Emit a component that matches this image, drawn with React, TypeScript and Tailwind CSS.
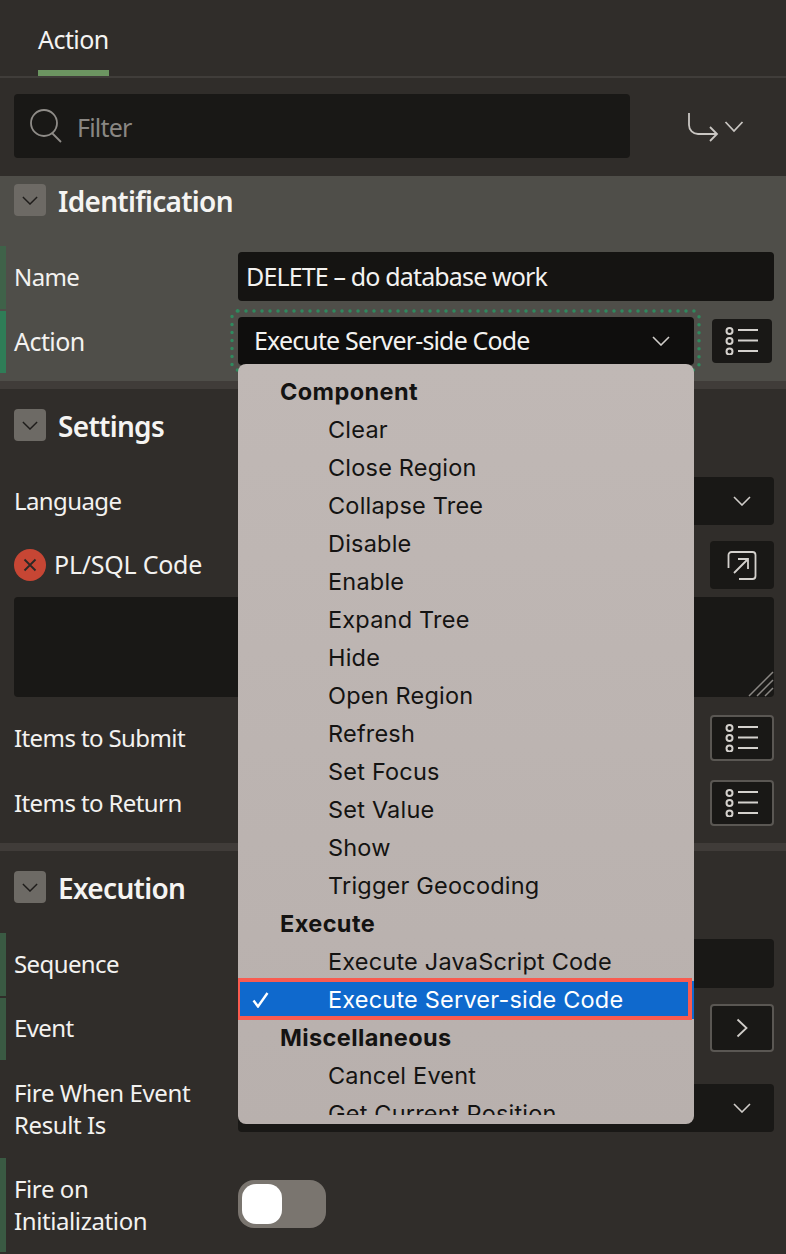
import type { ReactNode } from 'react'

const LABEL_FONT = "font-['Noto_Sans',sans-serif]"

function Chevron({ className = 'w-[18px] h-[10px] text-[#d0cdc9]' }: { className?: string }) {
    return (
        <svg viewBox="0 0 18 10" fill="none" className={className}>
            <path d="M1 1l8 8 8-8" stroke="currentColor" strokeWidth="1.6" />
        </svg>
    )
}

function ListIcon() {
    return (
        <svg width="34" height="28" viewBox="0 0 34 28" fill="none" stroke="#d4d1cd">
            <circle cx="4.5" cy="4" r="3" strokeWidth="2" />
            <circle cx="4.5" cy="14" r="3" strokeWidth="2" />
            <circle cx="4.5" cy="24.5" r="3" strokeWidth="2" />
            <path d="M13 3h20M13 13.500h20M13 24h20" strokeWidth="2" />
        </svg>
    )
}

function ListButton({ border = false }: { border?: boolean }) {
    return (
        <div className={`rounded flex items-center justify-center bg-[#191816] ${border ? 'w-[64px] h-[46px] border-2 border-[#5a5753]' : 'w-[60px] h-[44px] ml-[2px] mr-[4px]'}`}>
            <ListIcon />
        </div>
    )
}

function SectionHeader({ title }: { title: string }) {
    return (
        <div className="flex items-center h-[32px] pl-[14px] gap-[12px]">
            <div className="w-[32px] h-[32px] rounded bg-[#6d6a65] flex items-center justify-center">
                <Chevron className="w-[16px] h-[9px] text-[#1e1c1a]" />
            </div>
            <div className="pt-[1px] text-[28px] font-semibold text-[#f5f4f2] tracking-[-0.7px]">{title}</div>
        </div>
    )
}

interface RowProps {
    label: ReactNode
    bar?: string
    labelClass?: string
    className: string
    children?: ReactNode
}

// 왼쪽 초록 표시줄 + 라벨 + 입력 컨트롤
function Row({ label, bar = 'border-transparent', labelClass = 'text-[24px] tracking-[-0.6px]', className, children }: RowProps) {
    return (
        <div className={`flex items-center border-l-[6px] pl-[8px] pr-[12px] ${bar} ${className}`}>
            <div className={`w-[224px] shrink-0 leading-[32px] text-[#f3f2f0] ${labelClass}`}>{label}</div>
            <div className="grow flex items-center gap-[16px]">{children}</div>
        </div>
    )
}

const Field = ({ children, className = '' }: { children?: ReactNode; className?: string }) => (
    <div className={`h-[48px] grow rounded bg-[#191816] flex items-center ${className}`}>{children}</div>
)

const MENU: { text: string; head?: boolean; selected?: boolean }[] = [
    { text: 'Component', head: true },
    { text: 'Clear' },
    { text: 'Close Region' },
    { text: 'Collapse Tree' },
    { text: 'Disable' },
    { text: 'Enable' },
    { text: 'Expand Tree' },
    { text: 'Hide' },
    { text: 'Open Region' },
    { text: 'Refresh' },
    { text: 'Set Focus' },
    { text: 'Set Value' },
    { text: 'Show' },
    { text: 'Trigger Geocoding' },
    { text: 'Execute', head: true },
    { text: 'Execute JavaScript Code' },
    { text: 'Execute Server-side Code', selected: true },
    { text: 'Miscellaneous', head: true },
    { text: 'Cancel Event' },
    { text: 'Get Current Position' },
]

function DropdownMenu() {
    return (
        <div className="absolute left-[238px] top-[364px] w-[456px] h-[760px] rounded-lg bg-gradient-to-b from-[#c0b8b5] to-[#b8b0ad] pt-[9px] font-['Inter',sans-serif] text-[23.500px] text-[#141312]">
            <div className="h-[742px] overflow-hidden">
                {MENU.map((item) => (
                    <div
                        key={item.text}
                        className={`h-[38px] leading-[38px] ${item.head ? 'pl-[42px] font-bold tracking-[0.4px]' : 'pl-[90px] tracking-[0.2px]'} ${item.selected ? 'relative bg-[#0f69cd] text-white' : ''}`}
                    >
                        {item.selected && (
                            <>
                                <svg width="18" height="16" viewBox="0 0 18 16" fill="none" className="absolute left-[14px] top-[11px]">
                                    <path d="M1.500 8.500L6 14.500 15.500 1" stroke="#fff" strokeWidth="2.400" />
                                </svg>
                                <div className="absolute left-[-2px] right-[2px] top-[-3px] bottom-[-1px] border-4 border-[#f95b50]" />
                            </>
                        )}
                        {item.text}
                    </div>
                ))}
            </div>
        </div>
    )
}

export default function App() {
    return (
        <div className={`relative w-[786px] h-[1254px] overflow-hidden bg-[#302d2a] ${LABEL_FONT}`}>
            {/* 탭 */}
            <div className="h-[78px] border-b-2 border-[#403d3a] pl-[38px]">
                <div className="w-[71px] h-[76px] border-b-[6px] border-[#6c9561] pt-[19px] text-[25px] leading-[40px] tracking-[-0.55px] text-[#f5f4f2]">
                    Action
                </div>
            </div>

            {/* 필터 */}
            <div className="flex items-center pt-[16px] pl-[14px] h-[98px] pb-[18px]">
                <div className="w-[616px] h-[64px] rounded bg-[#191816] flex items-center pl-[15px] gap-[14px]">
                    <svg width="34" height="34" viewBox="0 0 34 34" fill="none" stroke="#8f8c88" strokeWidth="1.800">
                        <circle cx="15" cy="14" r="13" />
                        <path d="M23 24l9 9" />
                    </svg>
                    <span className="pt-[3px] text-[25px] tracking-[-0.8px] text-[#8a8783]">Filter</span>
                </div>
                <svg width="58" height="32" viewBox="0 0 58 32" fill="none" stroke="#c9c6c2" strokeWidth="1.800" className="ml-[57px]">
                    <path d="M2 3v12c0 5 4 9 9 9h19" />
                    <path d="M23 17l7 7-7 7" />
                    <path d="M38.500 12l8.500 9 8.500-9" />
                </svg>
            </div>

            {/* Identification */}
            <div className="h-[213px] bg-[#4f4e49] border-b-8 border-[#403c39] pt-[8px]">
                <SectionHeader title="Identification" />
                <div className="mt-[30px] flex flex-col gap-[2px]">
                    <Row label="Name" bar="border-[#3f6249]" className="h-[63px] pb-[2px]">
                        <div className="h-[49px] grow rounded bg-[#151412] flex items-center pl-[8px] text-[25px] tracking-[-0.85px] text-[#f3f2f0]">
                            DELETE – do database work
                        </div>
                    </Row>
                    <Row label="Action" labelClass="text-[25px] tracking-[-0.55px]" bar="border-[#2f7d57]" className="h-[62px] pb-[2px]">
                        <div className="relative h-[48px] w-[456px] rounded bg-[#0f0e0d] flex items-center justify-between pl-[16px] pr-[24px] text-[25px] tracking-[-0.85px] text-[#f3f2f0]">
                            Execute Server-side Code
                            <Chevron />
                            <svg width="472" height="64" viewBox="0 0 472 64" fill="none" className="absolute left-[-8px] top-[-8px]">
                                <rect x="2" y="2" width="467" height="59" rx="6" stroke="#2f8a5e" strokeWidth="3.500" strokeLinecap="round" strokeDasharray="0 8" />
                            </svg>
                        </div>
                        <ListButton />
                    </Row>
                </div>
            </div>

            {/* Settings */}
            <div className="h-[454px] pt-[20px]">
                <SectionHeader title="Settings" />
                <Row label="Language" className="h-[48px] mt-[36px]">
                    <Field className="justify-end pr-[23px]"><Chevron /></Field>
                </Row>
                <div className="flex items-center h-[48px] mt-[16px] pl-[14px] pr-[12px]">
                    <div className="w-[32px] h-[32px] rounded-full bg-[#c74634] flex items-center justify-center">
                        <svg width="14" height="14" viewBox="0 0 14 14" stroke="#2b2826" strokeWidth="1.800">
                            <path d="M1.500 1.500l11 11M12.500 1.500l-11 11" />
                        </svg>
                    </div>
                    <div className="ml-[8px] text-[25px] tracking-[-0.25px] text-[#f3f2f0]">PL/SQL Code</div>
                    <div className="ml-auto w-[64px] h-[48px] rounded bg-[#191816] flex items-center justify-center">
                        <svg width="30" height="30" viewBox="0 0 30 30" fill="none" stroke="#d4d1cd" strokeWidth="1.800">
                            <path d="M1.500 18V5a3 3 0 0 1 3-3h21a3 3 0 0 1 3 3v21a3 3 0 0 1-3 3H12" />
                            <path d="M7 23L21 9M11 9h10v10" />
                        </svg>
                    </div>
                </div>
                <div className="relative mt-[8px] ml-[14px] mr-[12px] h-[100px] rounded bg-[#191816]">
                    <svg width="26" height="26" viewBox="0 0 26 26" stroke="#8a8783" strokeWidth="1.500" className="absolute right-0 bottom-0">
                        <path d="M1 25L25 1M9 25L25 9M17 25l8-8" />
                    </svg>
                </div>
                <Row label="Items to Submit" className="h-[46px] mt-[18px]">
                    <div className="grow" />
                    <ListButton border />
                </Row>
                <Row label="Items to Return" className="h-[46px] mt-[19px]">
                    <div className="grow" />
                    <ListButton border />
                </Row>
            </div>

            <div className="h-[8px] bg-[#403c39]" />

            {/* Execution */}
            <div className="pt-[20px]">
                <SectionHeader title="Execution" />
                <div className="mt-[30px] flex flex-col gap-[2px]">
                    <Row label="Sequence" bar="border-[#3a5a43]" className="h-[63px] pb-[2px]">
                        <Field className="h-[49px]" />
                    </Row>
                    <Row label="Event" bar="border-[#3a5a43]" className="h-[62px] pb-[2px]">
                        <Field />
                        <div className="w-[64px] h-[48px] shrink-0 rounded border-2 border-[#5a5753] bg-[#191816] flex items-center justify-center">
                            <svg width="12" height="20" viewBox="0 0 12 20" fill="none" stroke="#d0cdc9" strokeWidth="1.800">
                                <path d="M1.500 1.500l9 8.500-9 8.500" />
                            </svg>
                        </div>
                    </Row>
                </div>
                <Row label={<>Fire When Event<br />Result Is</>} labelClass="pt-[1px] text-[24px] tracking-[-0.4px]" className="h-[64px] mt-[16px]">
                    <Field className="justify-end pr-[23px]"><Chevron /></Field>
                </Row>
                <Row label={<>Fire on<br />Initialization</>} labelClass="pt-[1px] text-[24px] tracking-[-0.4px]" bar="border-[#3a5a43]" className="h-[94px] mt-[18px] pb-[2px]">
                    <div className="w-[88px] h-[48px] rounded-[16px] bg-[#7a756f] p-[4px]">
                        <div className="w-[40px] h-[40px] rounded-[14px] bg-white" />
                    </div>
                </Row>
            </div>

            <DropdownMenu />
        </div>
    )
}
